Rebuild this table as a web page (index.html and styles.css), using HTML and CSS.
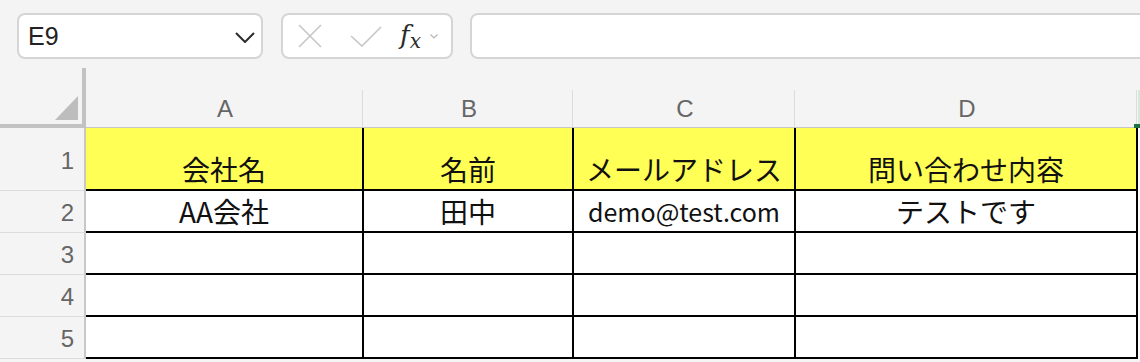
FILE: index.html
```html
<!DOCTYPE html>
<html lang="ja">
<head>
    <meta charset="UTF-8">
    <meta name="viewport" content="width=device-width, initial-scale=1.0">
    <title>お問い合わせ一覧</title>
    <link rel="stylesheet" href="styles.css">
</head>
<body>
    <!-- Barra de fórmulas -->
    <div class="toolbar">
        <div class="namebox">
            <span class="ref">E9</span>
            <svg class="chevron" width="20" height="11" viewBox="0 0 20 11">
                <path d="M1 1L10 10L19 1" fill="none" stroke="#2b2b2b" stroke-width="2"/>
            </svg>
        </div>
        <div class="fx-buttons">
            <svg class="btn-x" width="24" height="24" viewBox="0 0 24 24">
                <path d="M1 1L23 23M23 1L1 23" fill="none" stroke="#c6c6c6" stroke-width="1.6"/>
            </svg>
            <svg class="btn-ok" width="32" height="21" viewBox="0 0 32 21">
                <path d="M1 10L12 20L31 1" fill="none" stroke="#c6c6c6" stroke-width="1.6"/>
            </svg>
            <span class="fx"><i>f</i><sub>x</sub></span>
            <svg class="mini-chevron" width="8" height="5" viewBox="0 0 8 5">
                <path d="M0.5 0.5L4 4L7.5 0.5" fill="none" stroke="#b5b5b5" stroke-width="1.2"/>
            </svg>
        </div>
        <div class="formula"></div>
    </div>

    <!-- Hoja -->
    <div class="sheet">
        <div class="corner"></div>
        <div class="col-head">A</div>
        <div class="col-head">B</div>
        <div class="col-head">C</div>
        <div class="col-head">D</div>
        <div class="col-head sel"></div>

        <div class="row-head">1</div>
        <div class="cell head">会社名</div>
        <div class="cell head">名前</div>
        <div class="cell head">メールアドレス</div>
        <div class="cell head">問い合わせ内容</div>
        <div class="cell-e"></div>

        <div class="row-head">2</div>
        <div class="cell">AA会社</div>
        <div class="cell">田中</div>
        <div class="cell mail">demo@test.com</div>
        <div class="cell">テストです</div>
        <div class="cell-e"></div>

        <div class="row-head">3</div>
        <div class="cell"></div>
        <div class="cell"></div>
        <div class="cell"></div>
        <div class="cell"></div>
        <div class="cell-e"></div>

        <div class="row-head">4</div>
        <div class="cell"></div>
        <div class="cell"></div>
        <div class="cell"></div>
        <div class="cell"></div>
        <div class="cell-e"></div>

        <div class="row-head">5</div>
        <div class="cell"></div>
        <div class="cell"></div>
        <div class="cell"></div>
        <div class="cell"></div>
        <div class="cell-e"></div>
    </div>
</body>
</html>
```

FILE: styles.css
```css
/* Estilos base */
body {
    margin: 0;
    background-color: #f4f4f4;
    font-family: "Liberation Sans", Arial, sans-serif;
    overflow: hidden;
}

/* Barra superior */
.toolbar {
    display: flex;
    align-items: flex-start;
    gap: 18px;
    height: 68px;
    padding: 13px 0 0 17px;
    box-sizing: border-box;
}

.namebox,
.fx-buttons,
.formula {
    height: 46px;
    box-sizing: border-box;
    border: 2px solid #d5d5d5;
    border-radius: 8px;
    background-color: #ffffff;
    display: flex;
    align-items: center;
}

.namebox {
    width: 246px;
    padding: 0 6px 0 9px;
    justify-content: space-between;
}

.ref {
    font-size: 25px;
    color: #222222;
}

.chevron {
    margin-top: 3px;
}

.fx-buttons {
    width: 172px;
    padding-left: 15px;
}

.btn-ok {
    margin-left: 28px;
}

.fx {
    margin-left: 18px;
    font-family: "DejaVu Serif", "Liberation Serif", serif;
    color: #2b2b2b;
    line-height: 1;
}

.fx i {
    font-size: 26px;
}

.fx sub {
    font-style: italic;
    font-size: 20px;
    vertical-align: -4px;
}

.mini-chevron {
    margin-left: 9px;
}

.formula {
    flex: 1;
    margin-left: -1px;
    margin-right: -20px;
}

/* Cuadrícula de la hoja */
.sheet {
    display: grid;
    grid-template-columns: 86px 278px 210px 222px 342px 1fr;
    grid-template-rows: 60px 63px repeat(4, 42px);
}

.corner {
    position: relative;
    border-right: 4px solid #c2c2c2;
    border-bottom: 4px solid #c2c2c2;
}

.corner::after {
    content: "";
    position: absolute;
    right: 4px;
    bottom: 4px;
    width: 23px;
    height: 24px;
    background-color: #bdbdbd;
    clip-path: polygon(100% 0, 100% 100%, 0 100%);
}

.col-head {
    position: relative;
    display: flex;
    justify-content: center;
    align-items: center;
    padding-top: 22px;
    border-bottom: 1px solid #c6c6c6;
    font-size: 24px;
    color: #666666;
}

.col-head::after {
    content: "";
    position: absolute;
    right: 1px;
    top: 22px;
    bottom: 0;
    width: 1px;
    background-color: #dcdcdc;
}

/* Columna seleccionada */
.col-head.sel {
    border-bottom: none;
}

.col-head.sel::after {
    left: 0;
    right: 0;
    bottom: 4px;
    width: auto;
    background-color: #d2ebd5;
}

.col-head.sel::before {
    content: "";
    position: absolute;
    left: -4px;
    right: 0;
    bottom: 0;
    height: 4px;
    background-color: #1e7145;
}

.row-head {
    display: flex;
    justify-content: flex-end;
    align-items: center;
    padding: 3px 10px 0 0;
    border-right: 2px solid #c8c8c8;
    border-bottom: 1px solid #dcdcdc;
    font-size: 24px;
    color: #666666;
}

.cell {
    display: flex;
    justify-content: center;
    align-items: flex-end;
    padding-bottom: 6px;
    border-right: 2px solid #000000;
    border-bottom: 2px solid #000000;
    background-color: #ffffff;
    font-family: "Noto Sans CJK JP", "Noto Sans", sans-serif;
    font-size: 28px;
    line-height: 1;
    color: #111111;
    white-space: nowrap;
}

.cell.head {
    background-color: #ffff55;
}

.cell.mail {
    font-size: 25px;
    padding-bottom: 7px;
}

.cell-e {
    background-color: #ffffff;
}
```
